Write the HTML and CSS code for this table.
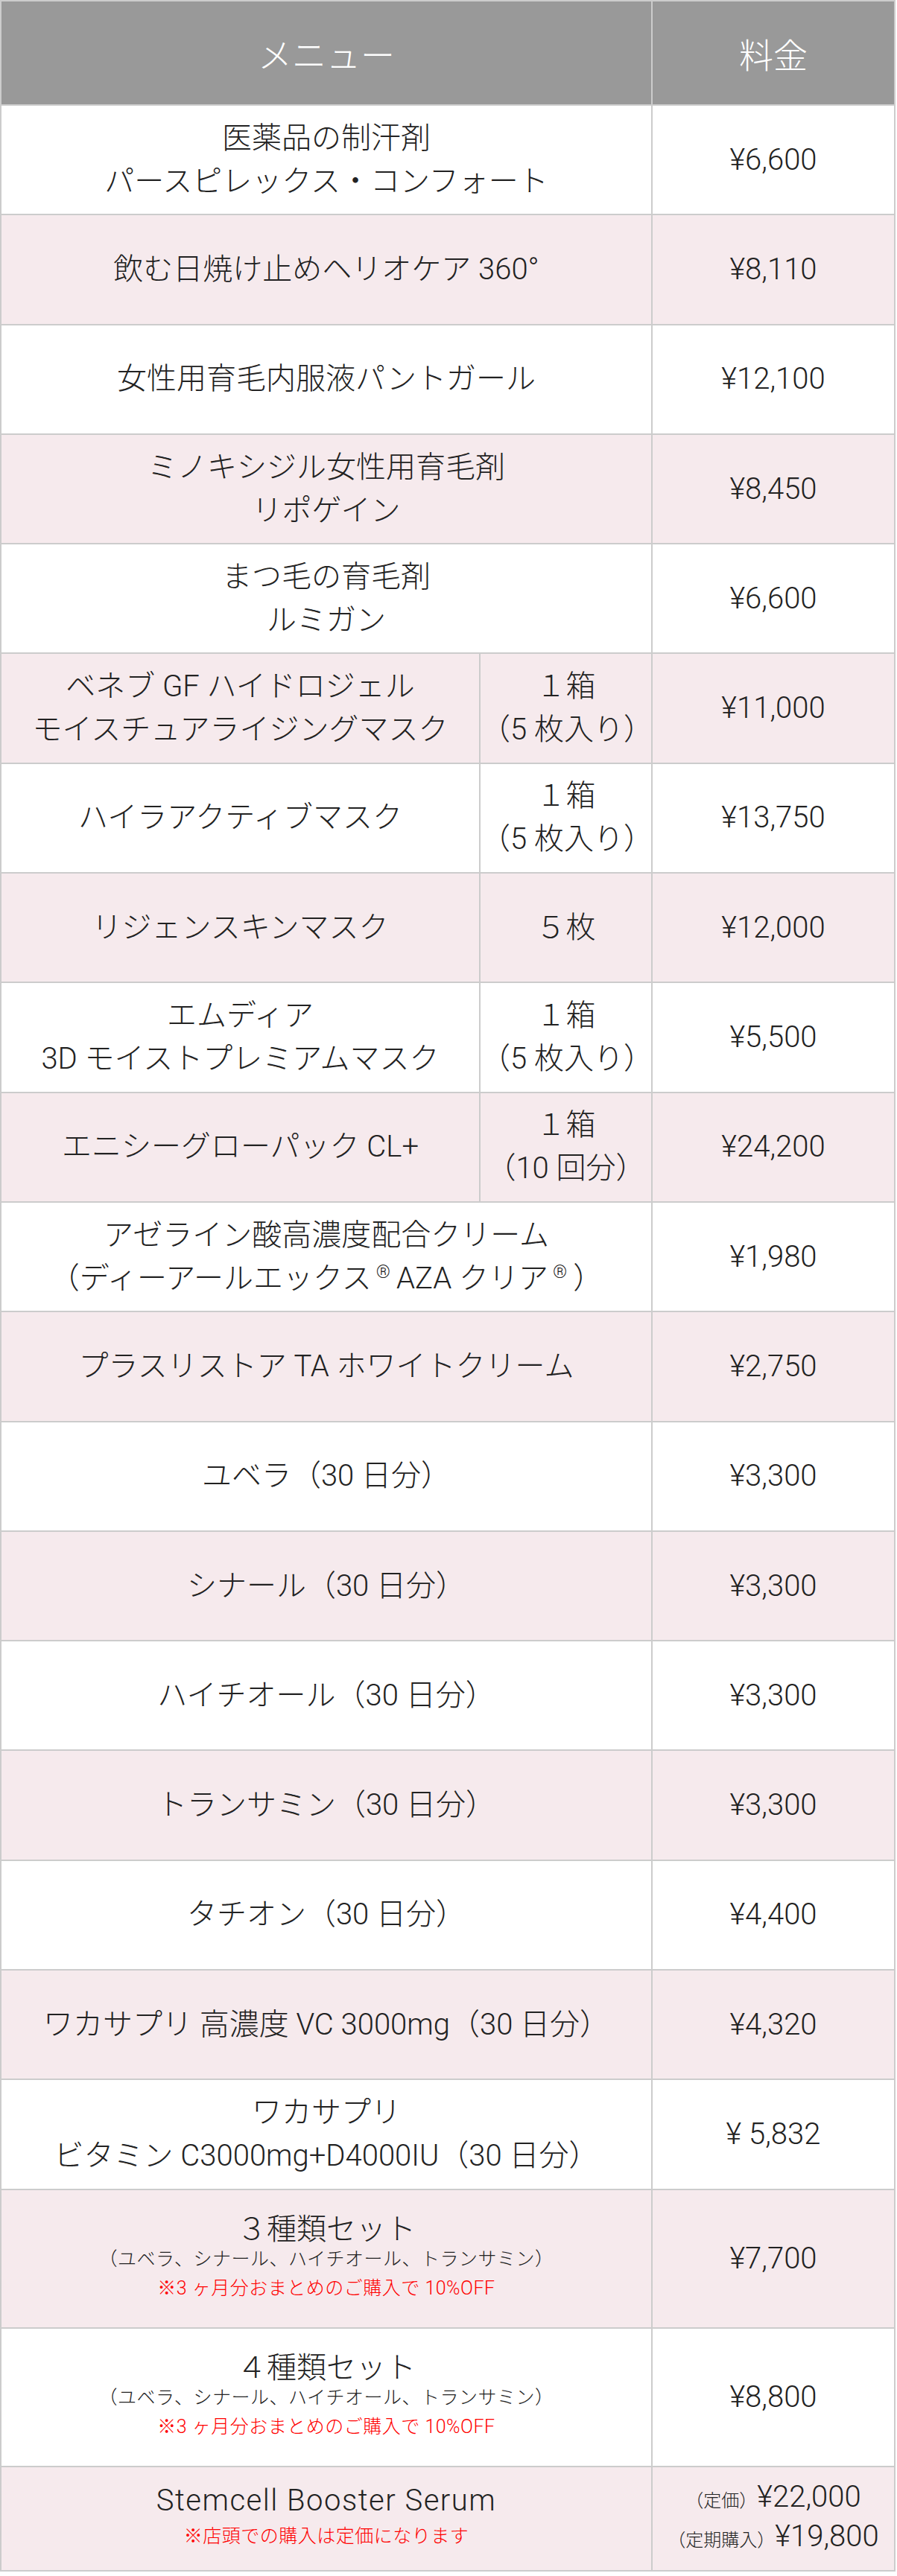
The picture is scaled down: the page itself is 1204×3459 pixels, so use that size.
FILE: index.html
```html
<!DOCTYPE html>
<html lang="ja">
  <head>
    <meta charset="utf-8">
    <title>料金表</title>
    <link rel="stylesheet" href="styles.css">
  </head>

  <body>
    <table class="price-table">
      <colgroup>
        <col class="col-menu">
        <col class="col-qty">
        <col class="col-price">
      </colgroup>
      <thead>
        <tr>
          <th colspan="2">メニュー</th>
          <th>料金</th>
        </tr>
      </thead>
      <tbody>
        <tr>
          <td colspan="2">医薬品の制汗剤<br>パースピレックス・コンフォート</td>
          <td>¥6,600</td>
        </tr>
        <tr>
          <td colspan="2">飲む日焼け止めヘリオケア 360°</td>
          <td>¥8,110</td>
        </tr>
        <tr>
          <td colspan="2">女性用育毛内服液パントガール</td>
          <td>¥12,100</td>
        </tr>
        <tr>
          <td colspan="2">ミノキシジル女性用育毛剤<br>リポゲイン</td>
          <td>¥8,450</td>
        </tr>
        <tr>
          <td colspan="2">まつ毛の育毛剤<br>ルミガン</td>
          <td>¥6,600</td>
        </tr>
        <tr>
          <td>ベネブ GF ハイドロジェル<br>モイスチュアライジングマスク</td>
          <td class="qty">１箱<br>（5 枚入り）</td>
          <td>¥11,000</td>
        </tr>
        <tr>
          <td>ハイラアクティブマスク</td>
          <td class="qty">１箱<br>（5 枚入り）</td>
          <td>¥13,750</td>
        </tr>
        <tr>
          <td>リジェンスキンマスク</td>
          <td class="qty">５枚</td>
          <td>¥12,000</td>
        </tr>
        <tr>
          <td>エムディア<br>3D モイストプレミアムマスク</td>
          <td class="qty">１箱<br>（5 枚入り）</td>
          <td>¥5,500</td>
        </tr>
        <tr>
          <td>エニシーグローパック CL+</td>
          <td class="qty">１箱<br>（10 回分）</td>
          <td>¥24,200</td>
        </tr>
        <tr>
          <td colspan="2">アゼライン酸高濃度配合クリーム<br>（ディーアールエックス<sup>®</sup>AZA クリア<sup>®</sup>）</td>
          <td>¥1,980</td>
        </tr>
        <tr>
          <td colspan="2">プラスリストア TA ホワイトクリーム</td>
          <td>¥2,750</td>
        </tr>
        <tr>
          <td colspan="2">ユベラ（30 日分）</td>
          <td>¥3,300</td>
        </tr>
        <tr>
          <td colspan="2">シナール（30 日分）</td>
          <td>¥3,300</td>
        </tr>
        <tr>
          <td colspan="2">ハイチオール（30 日分）</td>
          <td>¥3,300</td>
        </tr>
        <tr>
          <td colspan="2">トランサミン（30 日分）</td>
          <td>¥3,300</td>
        </tr>
        <tr>
          <td colspan="2">タチオン（30 日分）</td>
          <td>¥4,400</td>
        </tr>
        <tr>
          <td colspan="2">ワカサプリ 高濃度 VC 3000mg（30 日分）</td>
          <td>¥4,320</td>
        </tr>
        <tr>
          <td colspan="2">ワカサプリ<br>ビタミン C3000mg+D4000IU（30 日分）</td>
          <td>¥ 5,832</td>
        </tr>
        <tr class="set-row">
          <td colspan="2">
            <p class="set-name">３種類セット</p>
            <p class="set-items">（ユベラ、シナール、ハイチオール、トランサミン）</p>
            <p class="note">※3 ヶ月分おまとめのご購入で 10%OFF</p>
          </td>
          <td>¥7,700</td>
        </tr>
        <tr class="set-row">
          <td colspan="2">
            <p class="set-name">４種類セット</p>
            <p class="set-items">（ユベラ、シナール、ハイチオール、トランサミン）</p>
            <p class="note">※3 ヶ月分おまとめのご購入で 10%OFF</p>
          </td>
          <td>¥8,800</td>
        </tr>
        <tr class="serum-row">
          <td colspan="2">
            <p class="serum-name">Stemcell Booster Serum</p>
            <p class="note">※店頭での購入は定価になります</p>
          </td>
          <td>
            <p><span class="price-label">（定価）</span>¥22,000</p>
            <p><span class="price-label">（定期購入）</span>¥19,800</p>
          </td>
        </tr>
      </tbody>
    </table>
  </body>
</html>
```

FILE: styles.css
```css
* {
  box-sizing: border-box;
  margin: 0;
  padding: 0;
}

body {
  background: #fff;
  color: #222;
  font-family: Roboto, "Noto Sans CJK JP", sans-serif;
  font-weight: 300;
}

.price-table {
  width: 1202px;
  table-layout: fixed;
  border-collapse: separate;
  border-spacing: 0;
  border-top: 2px solid #ccc;
  border-left: 2px solid #ccc;
}

.col-menu { width: 643px; }
.col-qty { width: 231px; }
.col-price { width: 326px; }

th,
td {
  border-right: 2px solid #ccc;
  border-bottom: 2px solid #ccc;
  text-align: center;
  vertical-align: middle;
  padding: 0;
}

th {
  height: 140px;
  background: #999;
  color: #fff;
  font-size: 46px;
  font-weight: 300;
}

td {
  font-size: 40px;
  line-height: 58px;
}

td.qty {
  white-space: nowrap;
}

tbody tr {
  height: 147.3px;
}

tbody tr:nth-child(even) {
  background: #f6eaed;
}

sup {
  font-size: 24px;
  line-height: 0;
  vertical-align: 14px;
  margin: 0 8px 0 6px;
}

/* set rows */
.set-row {
  height: 186px;
}

.set-name {
  line-height: 40px;
}

.set-items,
.note {
  font-size: 25px;
  line-height: 39px;
  letter-spacing: 0.5px;
}

.note {
  color: #f00;
}

/* last row */
.serum-row {
  height: 140px;
}

.serum-row td {
  line-height: 48px;
}

.serum-name {
  letter-spacing: 1.5px;
}

.serum-row .note {
  line-height: 48px;
}

.price-label {
  font-size: 24px;
}
```
